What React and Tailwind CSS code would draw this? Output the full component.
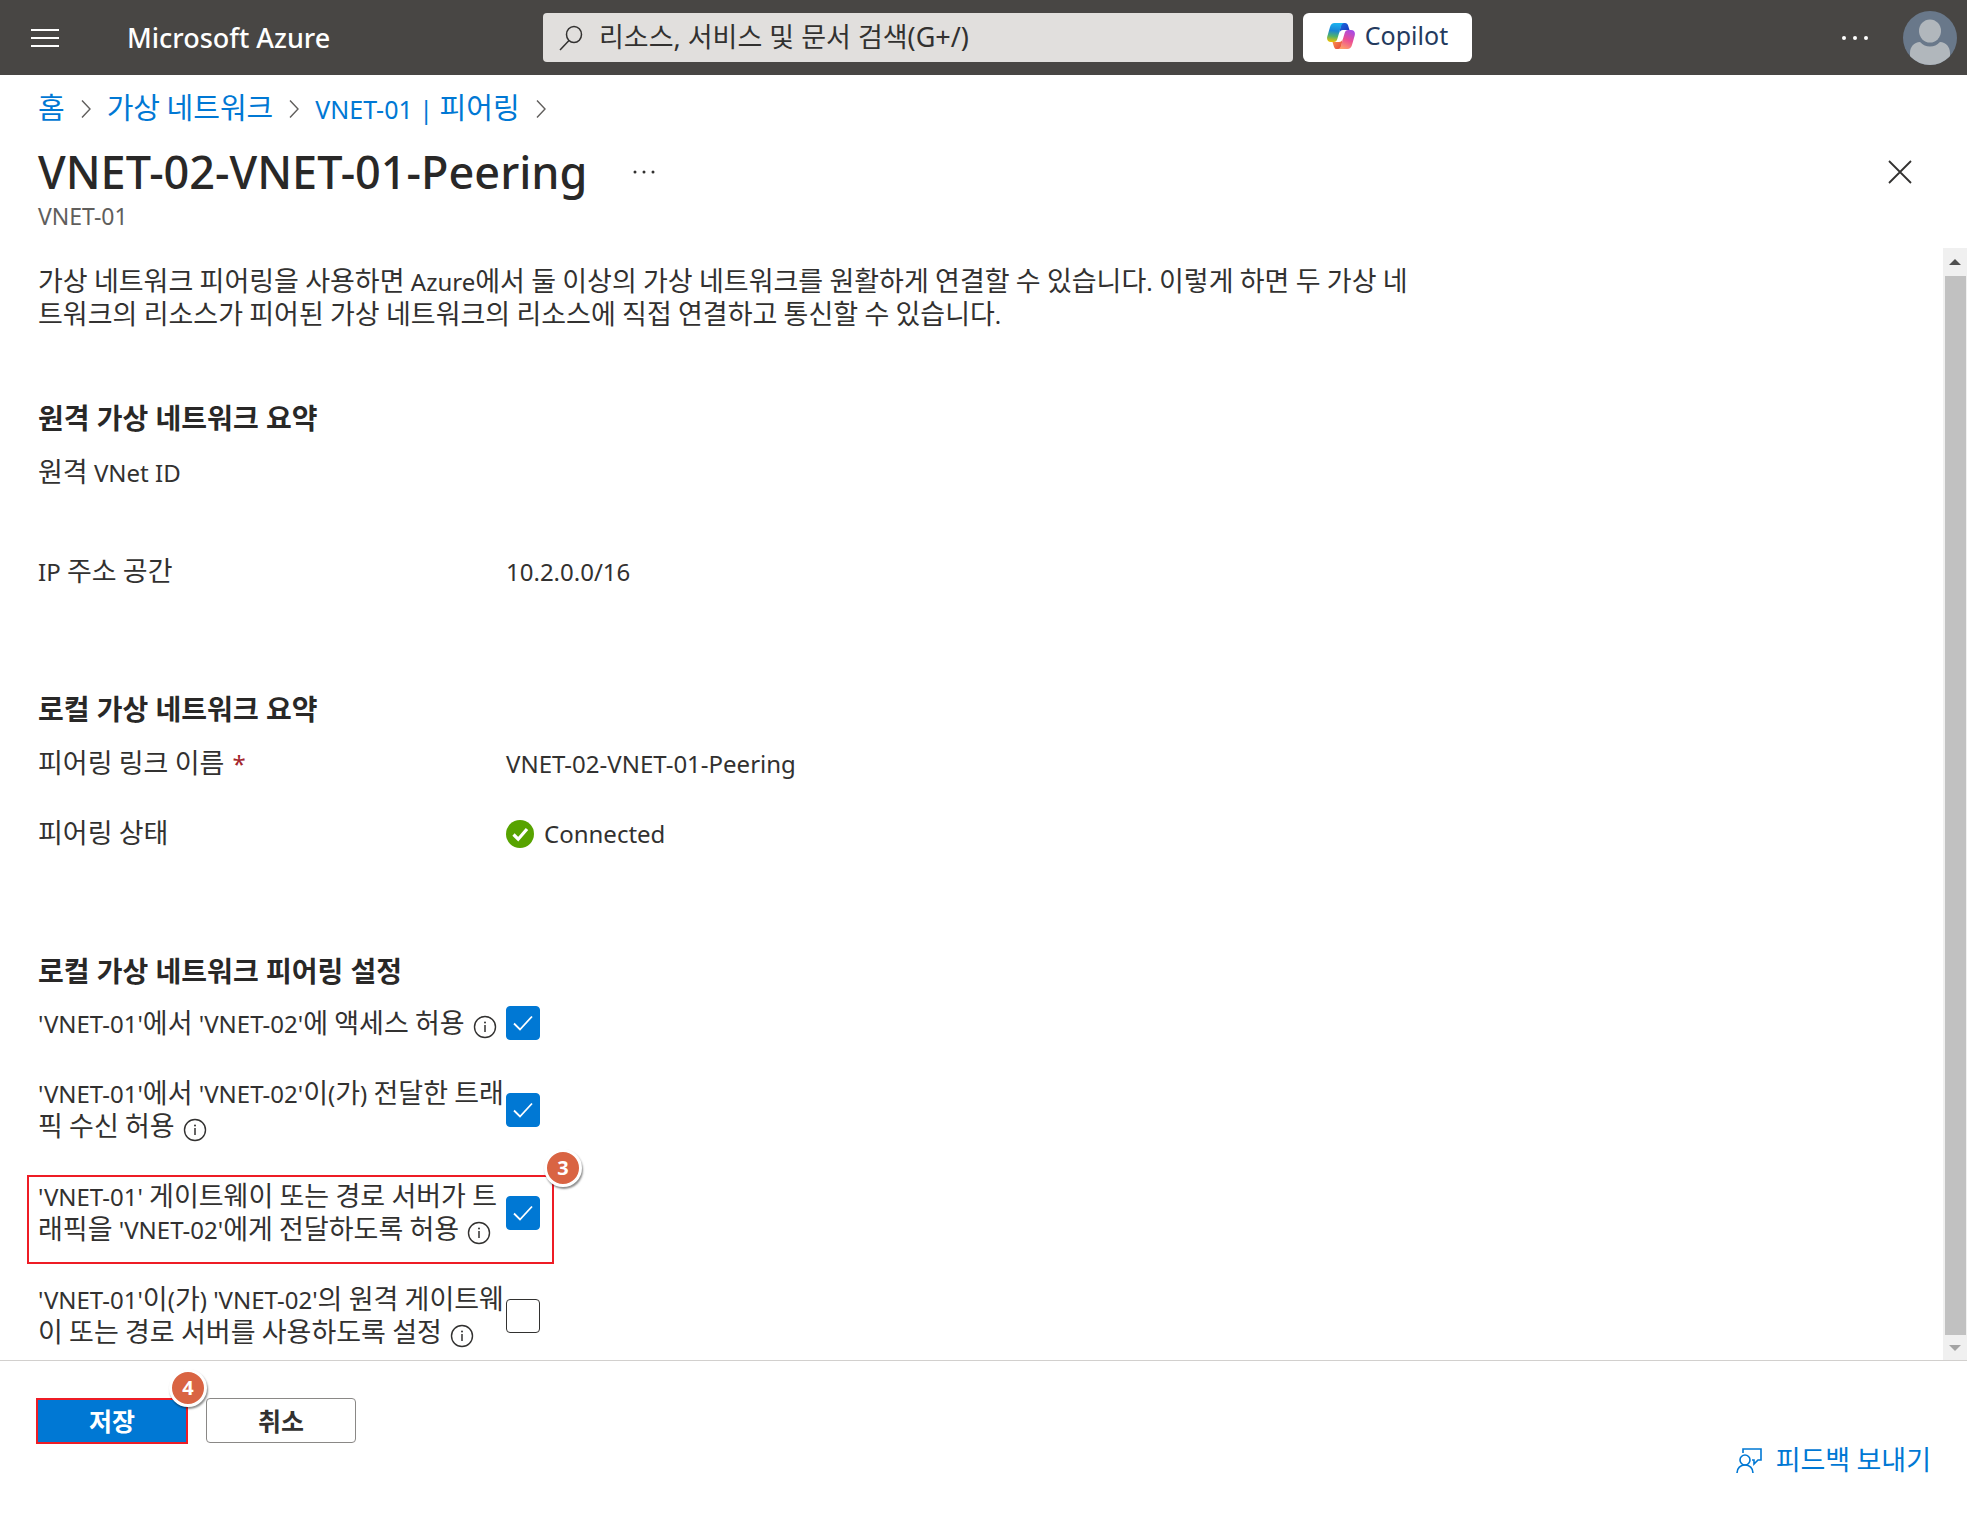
import { Fragment, useState } from "react";

const TEXT_SIZES = {
  crumb: { latin: "text-[25px]", hangul: "text-[29px]" },
  body: { latin: "text-[24px]", hangul: "text-[27px]" },
};

// "\u200b" marks a place where a Hangul word may wrap
const INTRO =
  "가상 네트워크 피어링을 사용하면 Azure에서 둘 이상의 가상 네트워크를 원활하게 연결할 수 있습니다. 이렇게 하면 두 가상 네\u200b트워크의 리소스가 피어된 가상 네트워크의 리소스에 직접 연결하고 통신할 수 있습니다.";

const SETTINGS = [
  { id: "access", label: "'VNET-01'에서 'VNET-02'에 액세스 허용", checked: true },
  { id: "forwarded", label: "'VNET-01'에서 'VNET-02'이(가) 전달한 트래\u200b픽 수신 허용", checked: true },
  {
    id: "gateway",
    label: "'VNET-01' 게이트웨이 또는 경로 서버가 트\u200b래픽을 'VNET-02'에게 전달하도록 허용",
    checked: true,
    badge: "3",
  },
  {
    id: "remote",
    label: "'VNET-01'이(가) 'VNET-02'의 원격 게이트웨\u200b이 또는 경로 서버를 사용하도록 설정",
    checked: false,
  },
];

// Latin and Hangul runs get their own size so they look balanced side by side
function Mixed({ children, size = "body" }) {
  const { latin, hangul } = TEXT_SIZES[size];
  const runs = children.match(/[가-힣]+|\u200b|[^가-힣\u200b]+/g);
  return (
    <span className={latin}>
      {runs.map((run, i) => {
        if (run === "\u200b") return <wbr key={i} />;
        if (/[가-힣]/.test(run)) {
          return (
            <span key={i} className={`font-['Liberation_Sans','Noto_Sans_CJK_KR',sans-serif] ${hangul} leading-none`}>
              {run}
            </span>
          );
        }
        return <Fragment key={i}>{run}</Fragment>;
      })}
    </span>
  );
}

function InfoIcon() {
  return (
    <svg viewBox="0 0 24 24" fill="none" stroke="#323130" className="ml-2 inline-block h-6 w-6 align-[-6px]">
      <circle cx="12" cy="12" r="10.5" strokeWidth="1.4" />
      <path d="M12 10v7" strokeWidth="1.5" />
      <circle cx="12" cy="7.4" r="1" fill="#323130" stroke="none" />
    </svg>
  );
}

function Chevron() {
  return (
    <svg viewBox="0 0 10 18" fill="none" stroke="#605e5c" strokeWidth="1.4" className="h-[18px] w-[10px] shrink-0">
      <path d="M1 0.5l8 8.5-8 8.5" />
    </svg>
  );
}

function CopilotLogo() {
  return (
    <svg viewBox="0 0 28 26" className="h-[26px] w-7">
      <defs>
        <linearGradient id="cpLeft" x1="0.4" y1="0" x2="0.3" y2="1">
          <stop offset="0" stopColor="#1bb3ef" />
          <stop offset="0.4" stopColor="#1a85d6" />
          <stop offset="0.7" stopColor="#52b26b" />
          <stop offset="1" stopColor="#f2c200" />
        </linearGradient>
        <linearGradient id="cpRight" x1="0.7" y1="0" x2="0.3" y2="1">
          <stop offset="0" stopColor="#a64be6" />
          <stop offset="0.5" stopColor="#ec4f93" />
          <stop offset="1" stopColor="#ff9f68" />
        </linearGradient>
        <linearGradient id="cpTop" x1="0" y1="0" x2="1" y2="1">
          <stop offset="0" stopColor="#1b6fe0" />
          <stop offset="1" stopColor="#1c2fb8" />
        </linearGradient>
        <linearGradient id="cpBottom" x1="0" y1="0" x2="1" y2="1">
          <stop offset="0" stopColor="#ff9b4a" />
          <stop offset="1" stopColor="#e2413f" />
        </linearGradient>
      </defs>
      <path d="M14 0h4c1.8 0 2.6 1 3.1 2.6L22.500 7H16c-2 0-3 1-3.6 3z" fill="url(#cpTop)" />
      <path d="M14 26h-4c-1.8 0-2.6-1-3.1-2.6L5.500 19H12c2 0 3-1 3.6-3z" fill="url(#cpBottom)" />
      <path d="M7.500 0H17c-1.8.4-2.5 1.8-3.1 3.8l-3.5 12c-.7 2.200-1.7 3.200-3.6 3.200H4C.8 19-.5 16.500.3 13.500L3 4C3.8 1.3 5.200 0 7.500 0z" fill="url(#cpLeft)" />
      <path d="M20.500 26H11c1.8-.4 2.5-1.8 3.1-3.8l3.5-12C18.300 8 19.300 7 21.200 7H24c3.200 0 4.500 2.500 3.7 5.500L25 22c-.8 2.7-2.200 4-4.500 4z" fill="url(#cpRight)" />
    </svg>
  );
}

function Badge({ children }) {
  return (
    <span className="absolute -top-[28px] -right-[30px] flex h-[38px] w-[38px] items-center justify-center rounded-full border-[3px] border-white bg-[#d96443] text-xl font-bold text-white shadow-[1px_2px_2px_rgba(0,0,0,0.45)]">
      {children}
    </span>
  );
}

function TopBar() {
  return (
    <header className="flex h-[75px] items-center bg-[#484644] pr-[10px] pl-[31px]">
      <button aria-label="메뉴" className="text-white">
        <svg viewBox="0 0 28 20" stroke="currentColor" strokeWidth="2" className="h-5 w-7">
          <path d="M0 2h28M0 10h28M0 18h28" />
        </svg>
      </button>
      <a href="#" className="ml-[68px] w-[416px] text-[27px] leading-9 font-medium text-white">
        Microsoft Azure
      </a>
      <div className="flex h-[49px] w-[750px] items-center gap-4 rounded bg-[#e1dfdd] px-4">
        <svg viewBox="0 0 24 28" fill="none" stroke="#323130" strokeWidth="1.5" className="h-7 w-6">
          <ellipse cx="15" cy="10.5" rx="7.5" ry="8" />
          <path d="M10 16.5L1 26" />
        </svg>
        <input
          type="text"
          aria-label="검색"
          placeholder="리소스, 서비스 및 문서 검색(G+/)"
          className="min-w-0 flex-1 bg-transparent text-[27px] outline-none placeholder:text-[#323130]"
        />
      </div>
      <button className="ml-[10px] flex h-[49px] w-[169px] items-center justify-center gap-[10px] rounded-md bg-white pb-1 text-[25px] text-[#243a5e]">
        <CopilotLogo />
        Copilot
      </button>
      <button aria-label="더 보기" className="ml-auto text-white">
        <svg viewBox="0 0 28 6" fill="currentColor" className="h-[6px] w-7">
          <circle cx="3" cy="3" r="2" />
          <circle cx="14" cy="3" r="2" />
          <circle cx="25" cy="3" r="2" />
        </svg>
      </button>
      <button aria-label="계정" className="ml-[34px]">
        <svg viewBox="0 0 54 54" className="h-[54px] w-[54px]">
          <defs>
            <clipPath id="avatarClip">
              <circle cx="27" cy="27" r="27" />
            </clipPath>
          </defs>
          <g clipPath="url(#avatarClip)">
            <rect width="54" height="54" fill="#69788a" />
            <ellipse cx="27" cy="20" rx="11" ry="11.5" fill="#b1b7bc" />
            <path d="M7 54V42c0-6 4-11 10-11 3 3 6 4.5 10 4.5S34 34 37 31c6 0 10 5 10 11v12z" fill="#b1b7bc" />
          </g>
        </svg>
      </button>
    </header>
  );
}

function Breadcrumb() {
  return (
    <nav className="flex h-9 items-center gap-4 leading-9 text-[#0078d4]">
      <a href="#">
        <Mixed size="crumb">홈</Mixed>
      </a>
      <Chevron />
      <a href="#">
        <Mixed size="crumb">가상 네트워크</Mixed>
      </a>
      <Chevron />
      <a href="#">
        <Mixed size="crumb">VNET-01 | 피어링</Mixed>
      </a>
      <Chevron />
    </nav>
  );
}

function SectionTitle({ children }) {
  return <h2 className="text-[28px] leading-9 font-bold text-[#292827]">{children}</h2>;
}

function Field({ label, required, children }) {
  return (
    <div className="grid grid-cols-[468px_1fr] items-center leading-[33px]">
      <dt>
        <Mixed>{label}</Mixed>
        {required && <span className="ml-2 text-[#a4262c]">*</span>}
      </dt>
      <dd className="flex items-center gap-[10px]">{children}</dd>
    </div>
  );
}

function CheckRow({ id, label, defaultChecked, badge }) {
  const [checked, setChecked] = useState(defaultChecked);

  return (
    <div
      className={
        badge
          ? "relative -mx-[11px] -mt-[5px] -mb-2 w-[527px] border-2 border-[#ee1c25] px-[9px] pt-[3px] pb-4"
          : "pb-[10px]"
      }
    >
      <div className="grid grid-cols-[468px_34px] items-center leading-[33px]">
        <label htmlFor={id}>
          <Mixed>{label}</Mixed>
          <InfoIcon />
        </label>
        <span className="grid h-[34px] w-[34px] place-items-center">
          <input
            id={id}
            type="checkbox"
            checked={checked}
            onChange={(e) => setChecked(e.target.checked)}
            className="col-start-1 row-start-1 h-[34px] w-[34px] appearance-none rounded-[4px] border border-[#323130] bg-white checked:border-[#0078d4] checked:bg-[#0078d4]"
          />
          {checked && (
            <svg
              viewBox="0 0 20 16"
              fill="none"
              stroke="white"
              strokeWidth="1.8"
              className="pointer-events-none col-start-1 row-start-1 h-4 w-5"
            >
              <path d="M1 8.5l6 6L19 1.5" />
            </svg>
          )}
        </span>
      </div>
      {badge && <Badge>{badge}</Badge>}
    </div>
  );
}

function ScrollBar() {
  return (
    <div aria-hidden="true" className="flex w-6 shrink-0 flex-col items-center bg-[#f0f0f0]">
      <div className="flex h-7 items-center">
        <svg viewBox="0 0 12 6" className="h-[6px] w-3" fill="#505050">
          <path d="M0 6l6-6 6 6z" />
        </svg>
      </div>
      <div className="w-[21px] flex-1 bg-[#c1c1c1]" />
      <div className="flex h-[25px] items-center">
        <svg viewBox="0 0 12 6" className="h-[6px] w-3" fill="#a3a3a3">
          <path d="M0 0l6 6 6-6z" />
        </svg>
      </div>
    </div>
  );
}

export default function App() {
  return (
    <div className="flex min-h-screen flex-col bg-white font-['Noto_Sans','Noto_Sans_CJK_KR',sans-serif] text-[24px] text-[#323130]">
      <TopBar />

      <div className="px-[38px] pt-4">
        <Breadcrumb />
        <div className="mt-[18px] flex h-[54px] items-center">
          <h1 className="text-[45px] leading-[54px] font-medium text-[#292827]">VNET-02-VNET-01-Peering</h1>
          <button aria-label="추가 작업" className="ml-[46px]">
            <svg viewBox="0 0 22 4" fill="#323130" className="h-1 w-[22px]">
              <circle cx="2" cy="2" r="1.5" />
              <circle cx="11" cy="2" r="1.5" />
              <circle cx="20" cy="2" r="1.5" />
            </svg>
          </button>
          <button aria-label="닫기" className="mr-[17px] ml-auto">
            <svg viewBox="0 0 24 24" stroke="#323130" strokeWidth="1.8" className="h-6 w-6">
              <path d="M1 1l22 22M23 1L1 23" />
            </svg>
          </button>
        </div>
        <p className="mt-[3px] text-[23px] leading-[28px] text-[#605e5c]">VNET-01</p>
      </div>

      <div className="mt-[18px] flex flex-1 border-b border-[#d2d0ce]">
        <main className="min-w-0 flex-1 px-[38px] pt-[17px]">
          <p className="max-w-[1380px] leading-[33px]">
            <Mixed>{INTRO}</Mixed>
          </p>

          <section className="mt-[69px]">
            <SectionTitle>원격 가상 네트워크 요약</SectionTitle>
            <dl className="mt-5">
              <Field label="원격 VNet ID" />
              <div className="mt-[66px]">
                <Field label="IP 주소 공간">10.2.0.0/16</Field>
              </div>
            </dl>
          </section>

          <section className="mt-[103px]">
            <SectionTitle>로컬 가상 네트워크 요약</SectionTitle>
            <dl className="mt-5 space-y-[37px]">
              <Field label="피어링 링크 이름" required>
                VNET-02-VNET-01-Peering
              </Field>
              <Field label="피어링 상태">
                <svg viewBox="0 0 28 28" className="h-7 w-7">
                  <circle cx="14" cy="14" r="14" fill="#57a300" />
                  <path d="M7.5 14.5l4.7 4.7L21 9" fill="none" stroke="white" strokeWidth="3.2" />
                </svg>
                Connected
              </Field>
            </dl>
          </section>

          <section className="mt-[103px]">
            <SectionTitle>로컬 가상 네트워크 피어링 설정</SectionTitle>
            <div className="mt-[17px] flex flex-col gap-[27px]">
              {SETTINGS.map(({ id, label, checked, badge }) => (
                <CheckRow key={id} id={id} label={label} defaultChecked={checked} badge={badge} />
              ))}
            </div>
          </section>
        </main>
        <ScrollBar />
      </div>

      <footer className="px-9 pt-[37px] pb-[63px]">
        <div className="flex gap-[18px]">
          <div className="relative">
            <button className="h-[46px] w-[152px] border-2 border-[#ee1c25] bg-[#0078d4] text-[25px] leading-8 font-bold text-white">
              저장
            </button>
            <span className="absolute -top-[29px] right-[-19px] flex h-[38px] w-[38px] items-center justify-center rounded-full border-[3px] border-white bg-[#d96443] text-xl font-bold text-white shadow-[1px_2px_2px_rgba(0,0,0,0.45)]">
              4
            </span>
          </div>
          <button className="h-[45px] w-[150px] rounded-[4px] border border-[#8a8886] text-[25px] leading-8 font-bold">
            취소
          </button>
        </div>
        <div className="flex justify-end">
          <a href="#" className="flex items-center gap-[14px] leading-[33px] text-[#0078d4]">
            <svg viewBox="0 0 26 26" fill="none" stroke="currentColor" strokeWidth="1.6" className="h-[26px] w-[26px]">
              <circle cx="9" cy="12" r="5" />
              <path d="M1 25c0-5 3.5-8 8-8s8 3 8 8" />
              <path d="M7 5V1h18v11h-3l-4 4v-4h-2" />
            </svg>
            <Mixed>피드백 보내기</Mixed>
          </a>
        </div>
      </footer>
    </div>
  );
}
